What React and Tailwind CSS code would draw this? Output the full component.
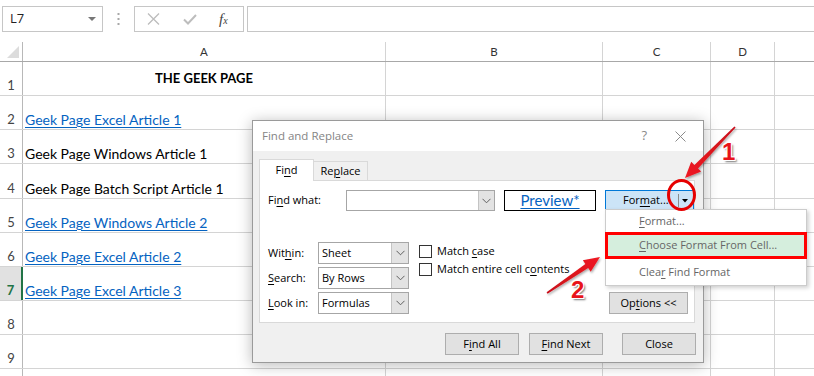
import React from "react";

const U = ({ children }) => (
  <span className="underline decoration-1 underline-offset-[2px]">{children}</span>
);

function Chevron() {
  return (
    <svg width="9" height="6" viewBox="0 0 9 6">
      <polyline points="0.5,0.8 4.5,4.8 8.5,0.8" fill="none" stroke="#606060" strokeWidth="1" />
    </svg>
  );
}

function Select({ value }) {
  return (
    <div className="flex h-[22px] w-[91px] border border-[#a6a6a6] bg-white">
      <div className="flex flex-1 items-center pl-[3px] text-black">{value}</div>
      <div className="flex w-[17px] items-center justify-center border-l border-[#c4c4c4] bg-[#e3e3e3]">
        <Chevron />
      </div>
    </div>
  );
}

function Btn({ children, w = "w-[74px]" }) {
  return (
    <div className={`flex h-[22px] ${w} items-center justify-center border border-[#adadad] bg-[#e1e1e1] text-black`}>
      {children}
    </div>
  );
}

function Check({ children }) {
  return (
    <div className="flex h-[18px] items-center gap-[5px]">
      <div className="h-[13px] w-[13px] border border-[#333] bg-white" />
      <span className="text-black">{children}</span>
    </div>
  );
}

const rowDefs = [
  { n: "1", h: "h-[34px]", title: true },
  { n: "2", h: "h-[34px]", text: "Geek Page Excel Article 1", link: true },
  { n: "3", h: "h-[34px]", text: "Geek Page Windows Article 1" },
  { n: "4", h: "h-[35px]", text: "Geek Page Batch Script Article 1" },
  { n: "5", h: "h-[34px]", text: "Geek Page Windows Article 2", link: true },
  { n: "6", h: "h-[34px]", text: "Geek Page Excel Article 2", link: true },
  { n: "7", h: "h-[34px]", text: "Geek Page Excel Article 3", link: true, sel: true },
  { n: "8", h: "h-[34px]" },
  { n: "9", h: "h-[34px]" },
  { n: "", h: "h-[34px]" },
];

function Sheet() {
  return (
    <div className="font-[Lato,sans-serif]">
      {/* column header */}
      <div className="flex h-[20px] border-b border-[#a8a8a8]">
        <div className="relative w-[23px] border-r border-[#b8b8b8]">
          <svg className="absolute left-[7px] top-[4px]" width="13" height="12" viewBox="0 0 13 12">
            <polygon points="0,12 12,12 12,0" fill="#dcdcdc" />
          </svg>
        </div>
        <div className="flex w-[363px] items-center justify-center border-r border-[#d4d4d4] text-[11.5px] text-[#333]">A</div>
        <div className="flex w-[217px] items-center justify-center border-r border-[#d4d4d4] text-[11.5px] text-[#333]">B</div>
        <div className="flex w-[108px] items-center justify-center border-r border-[#d4d4d4] text-[11.5px] text-[#333]">C</div>
        <div className="flex w-[64px] items-center justify-center border-r border-[#d4d4d4] text-[11.5px] text-[#333]">D</div>
        <div className="flex-1" />
      </div>
      {rowDefs.map((r, i) => (
        <div key={i} className={`flex ${r.h} border-b border-[#d4d4d4]`}>
          <div
            className={`flex w-[23px] items-end justify-center pb-[1px] text-[13px] leading-[17px] ${
              r.sel
                ? "border-r-2 border-[#217346] bg-[#e1e1e1] font-bold text-[#217346]"
                : "border-r border-[#b8b8b8] text-[#444]"
            }`}
          >
            {r.n}
          </div>
          <div
            className={`flex w-[363px] border-r border-[#d4d4d4] text-[14px] leading-[17px] ${
              r.title ? "items-center justify-center" : "items-end pb-[1px] pl-[2px]"
            }`}
          >
            {r.title && <span className="text-[13px] font-bold text-black">THE GEEK PAGE</span>}
            {r.text && (
              <span className={r.link ? "text-[#0563c1] underline decoration-1 underline-offset-[2px]" : "text-black"}>
                {r.text}
              </span>
            )}
          </div>
          <div className="w-[217px] border-r border-[#d4d4d4]" />
          <div className="w-[108px] border-r border-[#d4d4d4]" />
          <div className="w-[64px] border-r border-[#d4d4d4]" />
          <div className="flex-1" />
        </div>
      ))}
    </div>
  );
}

function Toolbar() {
  return (
    <div className="flex h-[42px] items-start gap-0 pt-[6px] font-['Open_Sans',sans-serif]">
      <div className="ml-[2px] flex h-[26px] w-[101px] items-center justify-between border border-[#c6c6c6] pl-[7px] pr-[6px] text-[13px] text-[#222]">
        <span>L7</span>
        <svg width="8" height="4" viewBox="0 0 8 4">
          <polygon points="0,0 8,0 4,4" fill="#777" />
        </svg>
      </div>
      <div className="flex h-[26px] w-[31px] items-center justify-center">
        <svg width="3" height="12" viewBox="0 0 3 12">
          <rect x="0.5" y="0" width="2" height="2" fill="#a8a8a8" />
          <rect x="0.5" y="5" width="2" height="2" fill="#a8a8a8" />
          <rect x="0.5" y="10" width="2" height="2" fill="#a8a8a8" />
        </svg>
      </div>
      <div className="flex h-[26px] w-[110px] items-center border border-[#c6c6c6]">
        <svg className="ml-[12px]" width="13" height="12" viewBox="0 0 13 12">
          <path d="M1 0.5 L12 11.5 M12 0.5 L1 11.5" stroke="#bdbdbd" strokeWidth="1.3" fill="none" />
        </svg>
        <svg className="ml-[23px]" width="14" height="11" viewBox="0 0 14 11">
          <path d="M1 5.5 L5 9.5 L13 1" stroke="#bdbdbd" strokeWidth="2" fill="none" />
        </svg>
        <span className="ml-[22px] font-['Liberation_Serif',serif] text-[15px] italic leading-none text-[#444]">
          f<span className="text-[10px]">x</span>
        </span>
      </div>
      <div className="ml-[3px] h-[26px] flex-1 border border-r-0 border-[#c6c6c6]" />
    </div>
  );
}

function Dialog() {
  return (
    <div className="absolute left-[252px] top-[120px] flex h-[243px] w-[452px] flex-col border border-[#9a9a9a] bg-[#f0f0f0] font-['Open_Sans',sans-serif] text-[11px] shadow-[0_2px_14px_rgba(0,0,0,0.28)]">
      <div className="flex h-[30px] items-center bg-white pl-[9px] text-[11.5px] text-[#858585]">
        <span>Find and Replace</span>
        <span className="ml-auto mr-[28px] text-[13px] text-[#8a8a8a]">?</span>
        <svg className="mr-[17px]" width="11" height="11" viewBox="0 0 11 11">
          <path d="M0.5 0.5 L10.5 10.5 M10.5 0.5 L0.5 10.5" stroke="#8a8a8a" strokeWidth="1" fill="none" />
        </svg>
      </div>
      <div className="flex flex-1 flex-col pl-[6px] pt-[7px]">
        {/* tabs */}
        <div className="relative z-10 flex h-[22px] items-end">
          <div className="-mb-px flex h-[22px] w-[55px] items-center justify-center border border-b-0 border-[#d9d9d9] bg-white text-black">
            Fi<U>n</U>d
          </div>
          <div className="flex h-[19px] w-[54px] items-center justify-center border border-b-0 border-l-0 border-[#d9d9d9] bg-[#f0f0f0] text-black">
            Re<U>p</U>lace
          </div>
        </div>
        {/* panel */}
        <div className="flex h-[143px] w-[436px] flex-col border border-[#d9d9d9] bg-white pl-[8px] pt-[9px]">
          <div className="flex h-[21px] items-center">
            <div className="w-[78px] text-black">
              Fi<U>n</U>d what:
            </div>
            <div className="flex h-[21px] w-[149px] border border-[#a6a6a6] bg-white">
              <div className="flex-1" />
              <div className="flex w-[16px] items-center justify-center border-l border-[#c4c4c4] bg-[#e3e3e3]">
                <Chevron />
              </div>
            </div>
            <div className="ml-[9px] flex h-[21px] w-[92px] items-center justify-center border border-black bg-white font-[Lato,sans-serif] text-[15px] text-[#0563c1] underline decoration-1 underline-offset-[2px]">
              Preview*
            </div>
            <div className="ml-[9px] flex h-[21px] w-[89px] items-center border border-[#0078d7] bg-[#cce4f7] text-black">
              <span className="ml-[17px]">
                For<U>m</U>at...
              </span>
              <span className="ml-[9px] h-[13px] w-px bg-[#8a8a8a]" />
              <svg className="ml-[3px]" width="6" height="4" viewBox="0 0 6 4">
                <polygon points="0,0 6,0 3,3.5" fill="#000" />
              </svg>
            </div>
          </div>
          <div className="mt-[31px] flex">
            <div className="flex flex-col gap-[3px]">
              <div className="flex items-center">
                <div className="w-[50px] text-black">
                  Wit<U>h</U>in:
                </div>
                <Select value="Sheet" />
              </div>
              <div className="flex items-center">
                <div className="w-[50px] text-black">
                  <U>S</U>earch:
                </div>
                <Select value="By Rows" />
              </div>
              <div className="flex items-center">
                <div className="w-[50px] text-black">
                  <U>L</U>ook in:
                </div>
                <Select value="Formulas" />
              </div>
            </div>
            <div className="ml-[10px] flex flex-col">
              <Check>
                Match <U>c</U>ase
              </Check>
              <Check>
                Match entire cell c<U>o</U>ntents
              </Check>
            </div>
            <div className="ml-auto mr-[6px] self-end">
              <Btn w="w-[79px]">
                Op<U>t</U>ions &lt;&lt;
              </Btn>
            </div>
          </div>
        </div>
        {/* bottom buttons */}
        <div className="mt-[10px] flex pl-[186px]">
          <Btn>
            F<U>i</U>nd All
          </Btn>
          <div className="ml-[10px]">
            <Btn>
              <U>F</U>ind Next
            </Btn>
          </div>
          <div className="ml-[19px]">
            <Btn>Close</Btn>
          </div>
        </div>
      </div>
    </div>
  );
}

function Menu() {
  return (
    <div className="absolute left-[605px] top-[209px] flex h-[77px] w-[202px] flex-col border border-[#cccccc] bg-white font-['Open_Sans',sans-serif] text-[11px] text-[#666] shadow-[2px_2px_4px_rgba(0,0,0,0.18)]">
      <div className="flex h-[22px] items-center pl-[33px]">
        <span>
          <U>F</U>ormat...
        </span>
      </div>
      <div className="-mx-px flex h-[27px] items-center border-[3px] border-[#ff0000] bg-[#d5eedd] pl-[31px]">
        <span>
          <U>C</U>hoose Format From Cell...
        </span>
      </div>
      <div className="flex flex-1 items-center pl-[33px]">
        <span>
          Clea<U>r</U> Find Format
        </span>
      </div>
    </div>
  );
}

function Annotations() {
  return (
    <>
      <svg className="pointer-events-none absolute left-0 top-0" width="814" height="376" viewBox="0 0 814 376">
        <defs>
          <filter id="sh" x="-20%" y="-20%" width="140%" height="140%">
            <feDropShadow dx="1" dy="1.5" stdDeviation="1" floodColor="#000" floodOpacity="0.35" />
          </filter>
          <linearGradient id="g1" x1="735" y1="127" x2="685" y2="178" gradientUnits="userSpaceOnUse">
            <stop offset="0" stopColor="#c8101a" />
            <stop offset="1" stopColor="#f01a22" />
          </linearGradient>
          <linearGradient id="g2" x1="547" y1="293" x2="600" y2="257" gradientUnits="userSpaceOnUse">
            <stop offset="0" stopColor="#c8101a" />
            <stop offset="1" stopColor="#f01a22" />
          </linearGradient>
        </defs>
        <polygon
          filter="url(#sh)"
          fill="url(#g1)"
          points="735.6,127.6 698,168.4 701.2,171.5 685,178 691.2,161.7 694.4,164.9 734.4,126.4"
        />
        <polygon
          filter="url(#sh)"
          fill="url(#g2)"
          points="547.5,293.7 588.2,268.1 590.7,271.8 600,257 582.8,260.2 585.4,263.9 546.6,292.3"
        />
        <ellipse cx="681.5" cy="195" rx="13" ry="14.5" fill="none" stroke="#e60000" strokeWidth="3" />
      </svg>
      <div className="absolute left-[722px] top-[140px] font-['Liberation_Sans',sans-serif] text-[24px] font-bold leading-none text-[#e8141a] [text-shadow:1px_1px_0_#fff,-1px_-1px_0_#fff,1px_-1px_0_#fff,-1px_1px_0_#fff,2px_2px_2px_#777]">
        1
      </div>
      <div className="absolute left-[571px] top-[278px] font-['Liberation_Sans',sans-serif] text-[24px] font-bold leading-none text-[#e8141a] [text-shadow:1px_1px_0_#fff,-1px_-1px_0_#fff,1px_-1px_0_#fff,-1px_1px_0_#fff,2px_2px_2px_#777]">
        2
      </div>
    </>
  );
}

export default function App() {
  return (
    <div className="relative h-[376px] w-[814px] overflow-hidden bg-white">
      <Toolbar />
      <Sheet />
      <Dialog />
      <Menu />
      <Annotations />
    </div>
  );
}
